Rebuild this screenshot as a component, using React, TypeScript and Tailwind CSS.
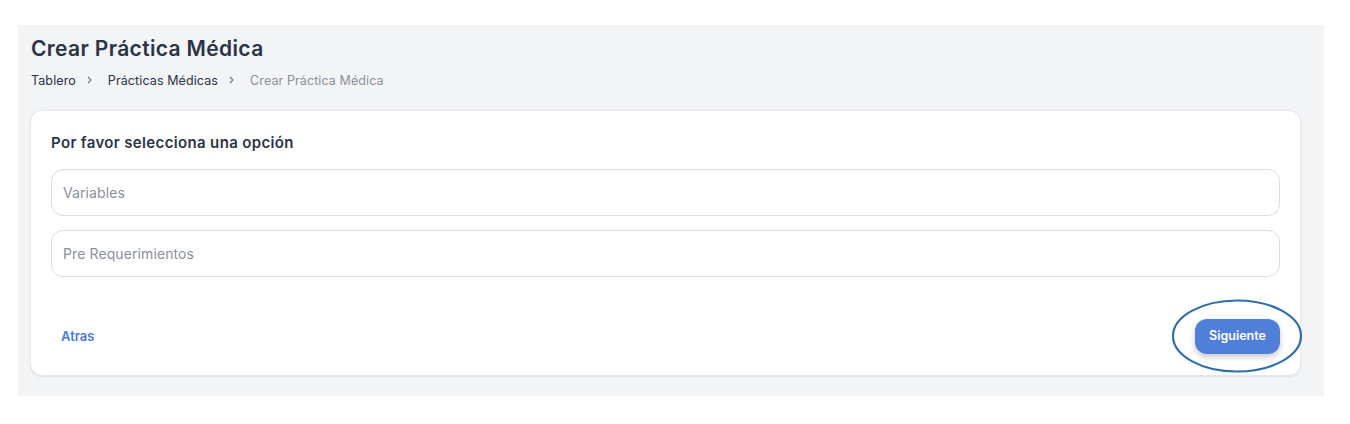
import React from 'react'

const font = { fontFamily: '"Inter", "Noto Sans", sans-serif' }

function Chevron() {
  return (
    <svg className="ml-[10px] mr-[15px] mb-[3px]" width="7" height="8" viewBox="0 0 7 8">
      <path d="M2 1 L5 4 L2 7" fill="none" stroke="#6b7280" strokeWidth="1.1" />
    </svg>
  )
}

export default function App() {
  return (
    <div className="min-h-[424px] bg-white pt-[25px] pl-[18px]" style={font}>
      <div className="w-[1306px] bg-[#f3f4f6] pl-3 pr-[23px] pt-[12px] pb-5">
        <h1 className="text-[21px] leading-[24px] font-semibold text-[#2b3346] tracking-[0.35px] pl-[1px]">Crear Práctica Médica</h1>
        <nav className="mt-[12px] flex items-center text-[12.5px] leading-[16px] pl-[1px]">
          <span className="text-[#2b3346] tracking-[0.1px]">Tablero</span>
          <Chevron />
          <span className="text-[#2b3346] tracking-[0.1px]">Prácticas Médicas</span>
          <Chevron />
          <span className="text-[#8b909a] tracking-[0.1px]">Crear Práctica Médica</span>
        </nav>
        <div className="mt-[21px] bg-white rounded-[12px] border border-[#e5e7eb] shadow-[0_1px_2px_rgba(0,0,0,0.08)] px-5 pt-[22px] pb-[21px]">
          <h2 className="text-[15px] leading-[20px] font-semibold text-[#2b3346] tracking-[0.35px]">Por favor selecciona una opción</h2>
          <div className="mt-[16px] flex flex-col gap-[14px]">
            <div className="h-[47px] rounded-[12px] border border-[#dcdde0] flex items-center px-[11px] text-[14px] text-[#8b909a] tracking-[0.1px]">Variables</div>
            <div className="h-[47px] rounded-[12px] border border-[#dcdde0] flex items-center px-[11px] text-[14px] text-[#8b909a] tracking-[0.1px]">Pre Requerimientos</div>
          </div>
          <div className="mt-[42px] flex items-center justify-between">
            <button className="ml-[10px] text-[13px] font-semibold text-[#4a7bd8]">Atras</button>
            <div className="relative">
              <button className="h-[35px] w-[85px] rounded-[12px] bg-[#507fd9] text-white text-[12.5px] font-semibold shadow-[0_3px_6px_rgba(0,0,0,0.22)]">Siguiente</button>
              <svg className="absolute left-[-24px] top-[-21px] pointer-events-none" width="132" height="76" viewBox="0 0 132 76">
                <ellipse cx="66" cy="38" rx="64" ry="35.5" fill="none" stroke="#2e6fab" strokeWidth="2.2" />
              </svg>
            </div>
          </div>
        </div>
      </div>
    </div>
  )
}
